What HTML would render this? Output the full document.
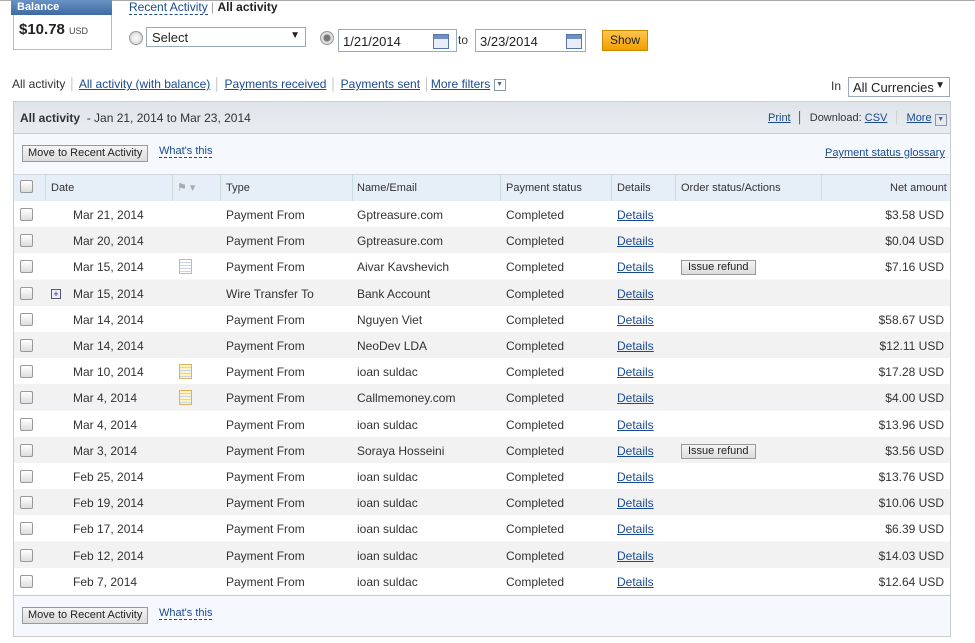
<!DOCTYPE html>
<html><head><style>
body{margin:0;width:975px;height:643px;background:#fff;font-family:"Liberation Sans",Arial,sans-serif;font-size:12px;color:#333;position:relative;overflow:hidden}
.a{position:absolute}
a,.lk{color:#1a4a8f;text-decoration:underline}
.dash{color:#1a4a8f;border-bottom:1px dashed #1a4a8f;text-decoration:none}
.btn{position:absolute;background:linear-gradient(#f4f4f4,#dcdcdc);border:1px solid #999;font-size:11px;color:#222;padding:0 5px;line-height:15px}
.cb{position:absolute;width:11px;height:11px;border:1px solid #999;border-radius:2px;background:linear-gradient(#fff,#ddd)}
.row{position:absolute;left:14px;width:936px;height:26px}
.row span{position:absolute;top:7px;white-space:nowrap}
.inp{position:absolute;border:1px solid #9aaabb;background:#fff;height:22px;font-size:13px;color:#222}
.cal{position:absolute;width:14px;height:13px;border:1px solid #5577aa;background:linear-gradient(#6f8fc0 0,#6f8fc0 4px,#e8eef8 4px)}
.radio{position:absolute;width:12px;height:12px;border-radius:50%;border:1px solid #999;background:radial-gradient(#fff,#ccc)}
</style></head><body>
<div class="a" style="left:0;top:0;width:975px;height:1px;background:#aaa"></div>
<div class="a" style="left:13px;top:0;width:97px;height:49px;border:1px solid #bbb;border-top:none"></div>
<div class="a" style="left:11px;top:0;width:101px;height:15px;background:linear-gradient(#6a93c4,#3c6aa3);color:#fff;font-weight:bold;font-size:11px;line-height:15px;padding-left:6px;box-sizing:border-box">Balance</div>
<div class="a" style="left:19px;top:21px;font-weight:bold;font-size:15px;color:#222">$10.78 <span style="font-size:9px;font-weight:normal;color:#444">USD</span></div>
<div class="a" style="left:129px;top:0;font-size:12px"><span class="dash" style="color:#1a4a8f">Recent Activity</span> <span style="color:#999">|</span> <b style="color:#222">All activity</b></div>
<div class="radio" style="left:129px;top:31px"></div>
<div class="inp" style="left:146px;top:27px;width:158px;height:18px"><span class="a" style="left:5px;top:2px">Select</span><span class="a" style="right:5px;top:2px;font-size:10px">▼</span></div>
<div class="radio" style="left:320px;top:31px;background:radial-gradient(#777 0,#777 3px,#ddd 4px)"></div>
<div class="inp" style="left:338px;top:29px;width:117px;height:21px"><span class="a" style="left:4px;top:4px">1/21/2014</span><div class="cal" style="left:94px;top:4px"></div></div>
<div class="a" style="left:458px;top:33px;font-size:12px">to</div>
<div class="inp" style="left:475px;top:29px;width:109px;height:21px"><span class="a" style="left:4px;top:4px">3/23/2014</span><div class="cal" style="left:90px;top:4px"></div></div>
<div class="a" style="left:602px;top:30px;width:44px;height:19px;background:linear-gradient(#ffc44d,#f2a000);border:1px solid #c98a00;font-size:12px;line-height:19px;text-align:center;color:#222">Show</div>
<div class="a" style="left:12px;top:77px;font-size:12px;white-space:nowrap"><span style="color:#333">All activity</span> <span style="color:#bbb">│</span> <span class="lk">All activity (with balance)</span> <span style="color:#bbb">│</span> <span class="lk">Payments received</span> <span style="color:#bbb">│</span> <span class="lk">Payments sent</span> <span style="color:#bbb">│</span><span class="lk">More filters</span> <span style="display:inline-block;width:10px;height:10px;border:1px solid #89a;font-size:7px;line-height:10px;text-align:center;color:#567;vertical-align:middle">▼</span></div>
<div class="a" style="left:831px;top:79px">In</div>
<div class="inp" style="left:848px;top:77px;width:100px;height:18px"><span class="a" style="left:4px;top:2px">All Currencies</span><span class="a" style="right:4px;top:2px;font-size:10px">▼</span></div>
<div class="a" style="left:13px;top:101px;width:936px;height:534px;border:1px solid #ccc;background:#f5f9fd"></div>
<div class="a" style="left:14px;top:102px;width:936px;height:31px;background:linear-gradient(#dfe4ea,#e9edf1);border-bottom:1px solid #ccc"></div>
<div class="a" style="left:20px;top:111px;font-size:12px"><b>All activity</b> &nbsp;- Jan 21, 2014 to Mar 23, 2014</div>
<div class="a" style="left:768px;top:112px;font-size:11px;white-space:nowrap"><span class="lk">Print</span> <span style="color:#333">&nbsp;│&nbsp;</span> Download: <span class="lk">CSV</span> <span style="color:#ccc">&nbsp;│&nbsp;</span> <span class="lk">More</span> <span style="display:inline-block;width:10px;height:10px;border:1px solid #89a;font-size:7px;line-height:10px;text-align:center;color:#567">▼</span></div>
<div class="btn" style="left:22px;top:145px">Move to Recent Activity</div>
<div class="a dash" style="left:159px;top:145px;font-size:11px">What's this</div>
<div class="a lk" style="left:825px;top:147px;font-size:11px">Payment status glossary</div>
<div class="a" style="left:14px;top:174px;width:936px;height:27px;background:#e6eef8;border-top:1px solid #d0d8e0;border-bottom:1px solid #ccd"></div>
<div class="cb" style="left:20px;top:180px"></div>
<div class="a" style="left:51px;top:182px;font-size:11px">Date</div>
<div class="a" style="left:177px;top:181px;color:#aaa;font-size:11px">⚑ ▾</div>
<div class="a" style="left:226px;top:182px;font-size:11px">Type</div>
<div class="a" style="left:357px;top:182px;font-size:11px">Name/Email</div>
<div class="a" style="left:506px;top:182px;font-size:11px">Payment status</div>
<div class="a" style="left:617px;top:182px;font-size:11px">Details</div>
<div class="a" style="left:681px;top:182px;font-size:11px">Order status/Actions</div>
<div class="a" style="left:890px;top:182px;font-size:11px">Net amount</div>
<div class="a" style="left:45px;top:175px;width:1px;height:26px;background:#cdd"></div>
<div class="a" style="left:172px;top:175px;width:1px;height:26px;background:#cdd"></div>
<div class="a" style="left:220px;top:175px;width:1px;height:26px;background:#cdd"></div>
<div class="a" style="left:352px;top:175px;width:1px;height:26px;background:#cdd"></div>
<div class="a" style="left:500px;top:175px;width:1px;height:26px;background:#cdd"></div>
<div class="a" style="left:611px;top:175px;width:1px;height:26px;background:#cdd"></div>
<div class="a" style="left:675px;top:175px;width:1px;height:26px;background:#cdd"></div>
<div class="a" style="left:821px;top:175px;width:1px;height:26px;background:#cdd"></div>
<div id="rows"></div>
<div class="a" style="left:14px;top:595px;width:936px;height:1px;background:#ccc"></div>
<div class="btn" style="left:22px;top:607px">Move to Recent Activity</div>
<div class="a dash" style="left:159px;top:607px;font-size:11px">What's this</div>
<script>
var d=[["Mar 21, 2014","","Payment From","Gptreasure.com","$3.58 USD",0],
["Mar 20, 2014","","Payment From","Gptreasure.com","$0.04 USD",0],
["Mar 15, 2014","n","Payment From","Aivar Kavshevich","$7.16 USD",1],
["Mar 15, 2014","p","Wire Transfer To","Bank Account","",0],
["Mar 14, 2014","","Payment From","Nguyen Viet","$58.67 USD",0],
["Mar 14, 2014","","Payment From","NeoDev LDA","$12.11 USD",0],
["Mar 10, 2014","y","Payment From","ioan suldac","$17.28 USD",0],
["Mar 4, 2014","y","Payment From","Callmemoney.com","$4.00 USD",0],
["Mar 4, 2014","","Payment From","ioan suldac","$13.96 USD",0],
["Mar 3, 2014","","Payment From","Soraya Hosseini","$3.56 USD",1],
["Feb 25, 2014","","Payment From","ioan suldac","$13.76 USD",0],
["Feb 19, 2014","","Payment From","ioan suldac","$10.06 USD",0],
["Feb 17, 2014","","Payment From","ioan suldac","$6.39 USD",0],
["Feb 12, 2014","","Payment From","ioan suldac","$14.03 USD",0],
["Feb 7, 2014","","Payment From","ioan suldac","$12.64 USD",0]];
var h="";
d.forEach(function(r,i){var t=201+Math.round(i*26.2);
h+='<div class="row" style="top:'+t+'px;background:'+(i%2?'#f2f2f2':'#fff')+'">';
h+='<div class="cb" style="left:6px;top:7px"></div>';
if(r[1]=="p")h+='<div class="a" style="left:37px;top:9px;width:8px;height:8px;border:1px solid #557;font-size:9px;line-height:8px;text-align:center;color:#224;background:#eef">+</div>';
if(r[1]=="n"||r[1]=="y")h+='<div class="a" style="left:165px;top:6px;width:11px;height:13px;border:1px solid '+(r[1]=="y"?'#e0b060':'#bbb')+';background:repeating-linear-gradient('+(r[1]=="y"?'#fff3c0':'#fff')+' 0 2px,#c8d4e8 2px 3px)"></div>';
h+='<span style="left:59px">'+r[0]+'</span><span style="left:212px">'+r[2]+'</span><span style="left:343px">'+r[3]+'</span><span style="left:492px">Completed</span><span class="lk" style="left:603px">Details</span>';
if(r[5])h+='<div class="btn" style="left:667px;top:7px;padding:0 6px;line-height:13px">Issue refund</div>';
if(r[4])h+='<span style="right:6px">'+r[4]+'</span>';
h+='</div>';});
document.getElementById('rows').innerHTML=h;
</script>
</body></html>
